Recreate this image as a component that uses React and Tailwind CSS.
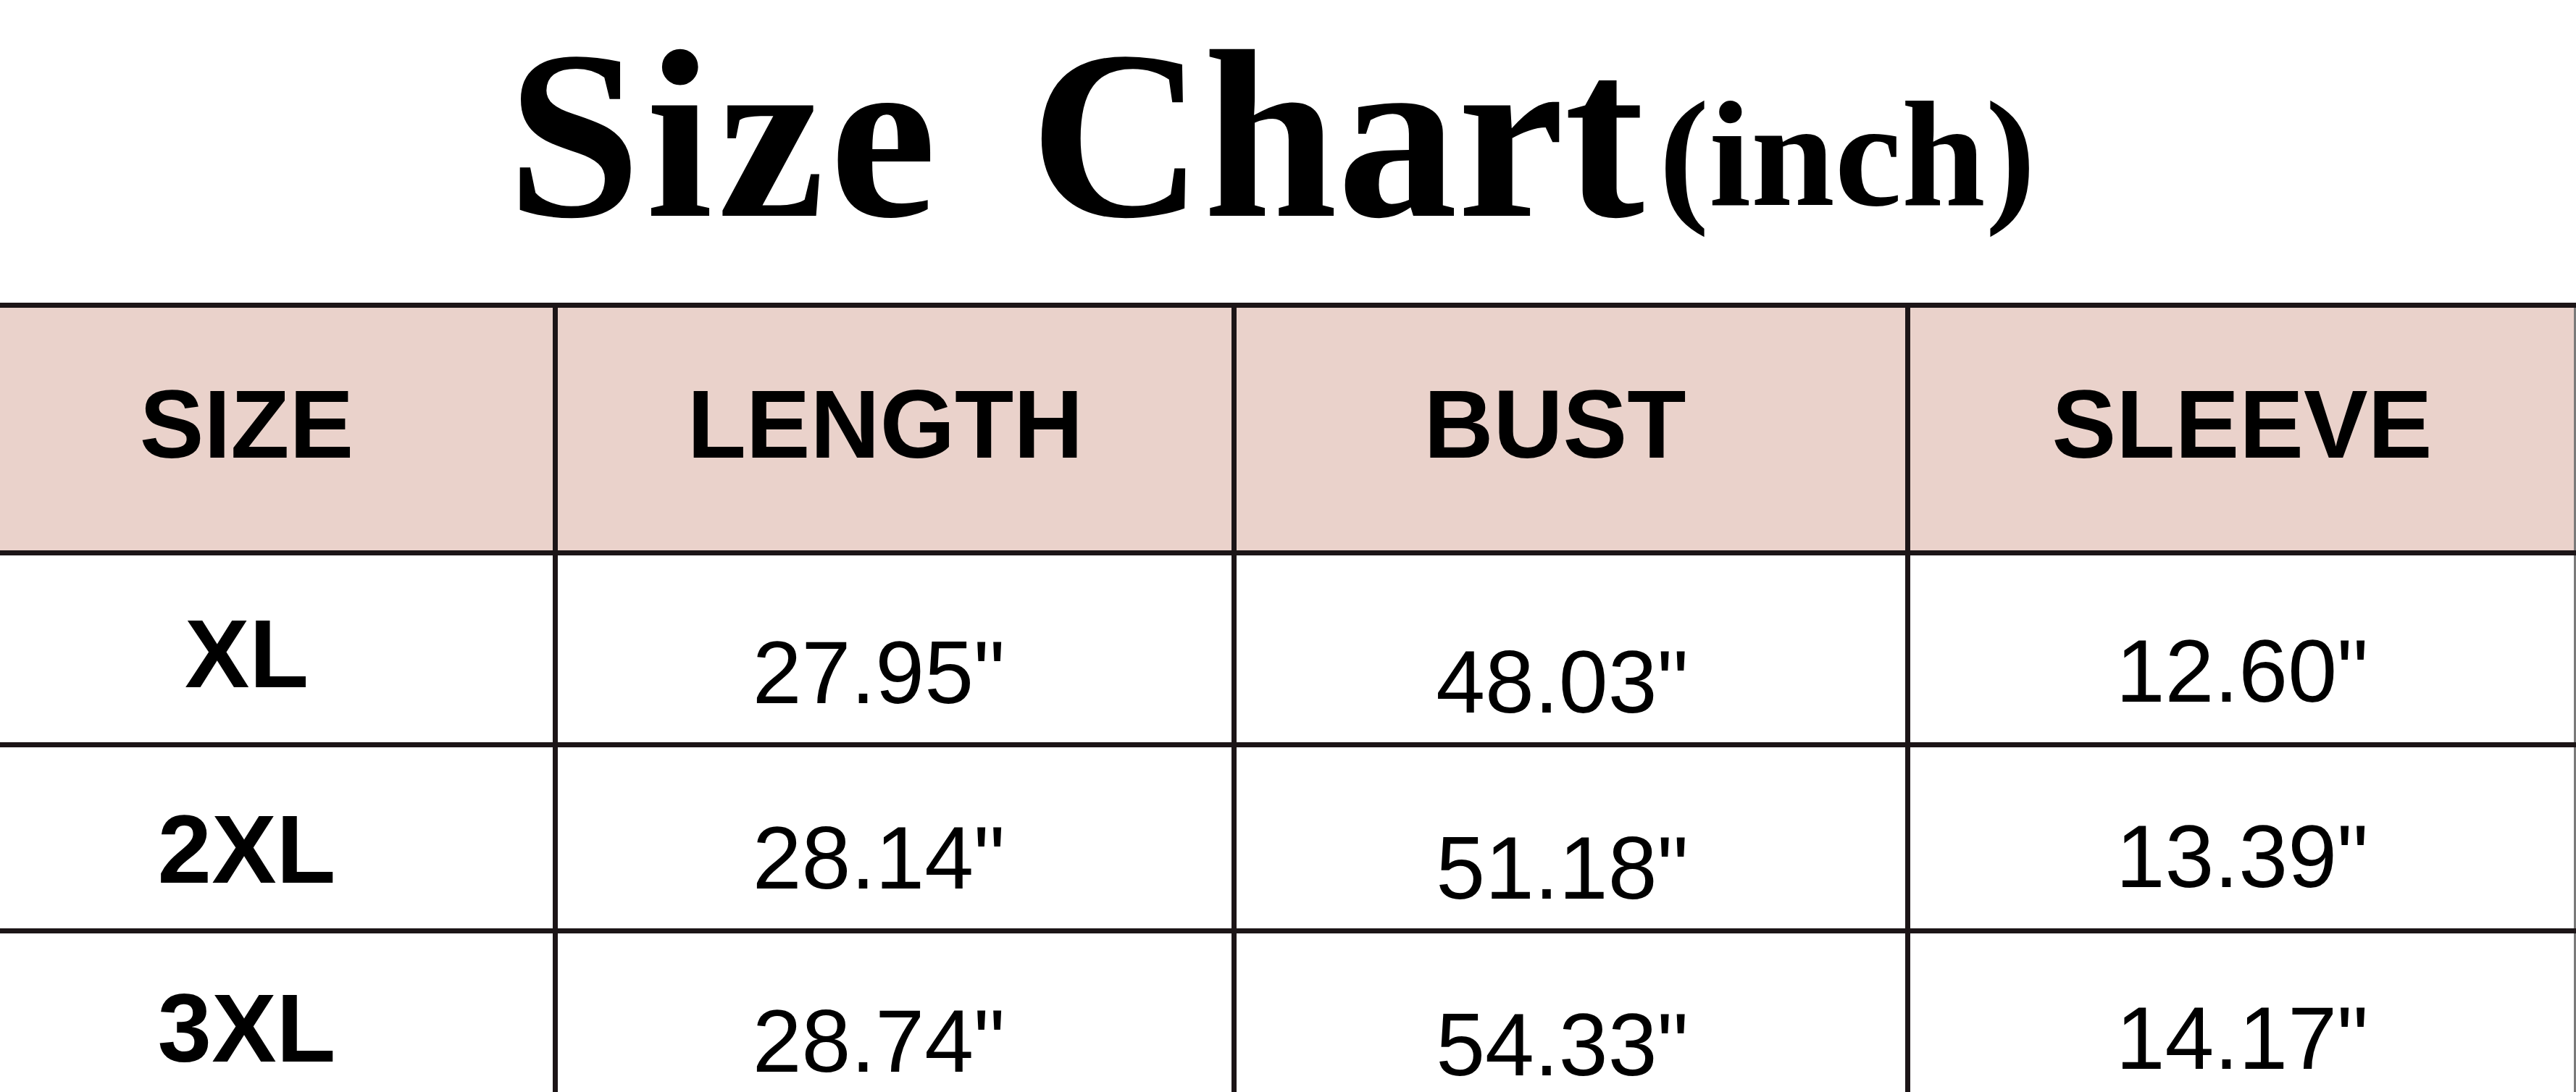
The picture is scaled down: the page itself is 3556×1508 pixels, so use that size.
import React from 'react';

const rows = [
  {
    h: 'h-[265px] border-b-[7px]',
    cells: [
      { text: 'XL', cls: 'pt-[14px] pr-[82px] font-bold text-[134px]' },
      { text: '27.95"', cls: 'pt-[68px] pr-[44px] text-[122px]' },
      { text: '48.03"', cls: 'pt-[94px] pr-[24px] text-[122px]' },
      { text: '12.60"', cls: 'pt-[64px] text-[122px]' },
    ],
  },
  {
    h: 'h-[257px] border-b-[7px]',
    cells: [
      { text: '2XL', cls: 'pt-[32px] pr-[82px] font-bold text-[134px]' },
      { text: '28.14"', cls: 'pt-[58px] pr-[44px] text-[122px]' },
      { text: '51.18"', cls: 'pt-[86px] pr-[24px] text-[122px]' },
      { text: '13.39"', cls: 'pt-[54px] text-[122px]' },
    ],
  },
  {
    // last row runs off the bottom of the picture
    h: 'h-[219px]',
    cells: [
      { text: '3XL', cls: 'pt-[43px] pr-[82px] font-bold text-[134px]' },
      { text: '28.74"', cls: 'pt-[81px] pr-[44px] text-[122px]' },
      { text: '54.33"', cls: 'pt-[90px] pr-[24px] text-[122px]' },
      { text: '14.17"', cls: 'pt-[73px] text-[122px]' },
    ],
  },
];

const widths = [
  'w-[770px] border-r-[7px] border-[#1c1517]',
  'w-[937px] border-r-[7px] border-[#1c1517]',
  'w-[930px] border-r-[7px] border-[#1c1517]',
  'flex-1 border-r-[3px] border-r-[#7a7a7a]',
];

const headers = [
  { text: 'SIZE', cls: 'pr-[82px]' },
  { text: 'LENGTH', cls: 'pr-[26px]' },
  { text: 'BUST', cls: 'pr-[44px]' },
  { text: 'SLEEVE', cls: '' },
];

export default function App() {
  return (
    <div className="h-[1508px] w-full overflow-hidden bg-white text-black font-['Liberation_Sans',Arial,sans-serif]">
      <div className="h-[418px] pt-[20px] pr-[46px] text-center leading-none whitespace-nowrap font-['Liberation_Serif','Times_New_Roman',serif] font-bold">
        <span className="text-[332px] tracking-[7px]">Size</span>
        <span className="text-[332px] ml-[122px]">Chart</span>
        <span className="text-[208px] ml-[20px] align-[15px]">(inch)</span>
      </div>

      <div className="flex h-[349px] border-y-[7px] border-[#1c1517] bg-[#ead2cb]">
        {headers.map((hd, i) => (
          <div key={hd.text} className={`${widths[i]} h-full flex items-center justify-center pb-[12px] ${hd.cls}`}>
            <span className="font-bold text-[133px] leading-none">{hd.text}</span>
          </div>
        ))}
      </div>

      {rows.map((row, r) => (
        <div key={r} className={`flex ${row.h} border-[#1c1517]`}>
          {row.cells.map((c, i) => (
            <div key={i} className={`${widths[i]} h-full flex items-center justify-center leading-[0.9] ${c.cls}`}>
              {c.text}
            </div>
          ))}
        </div>
      ))}
    </div>
  );
}
